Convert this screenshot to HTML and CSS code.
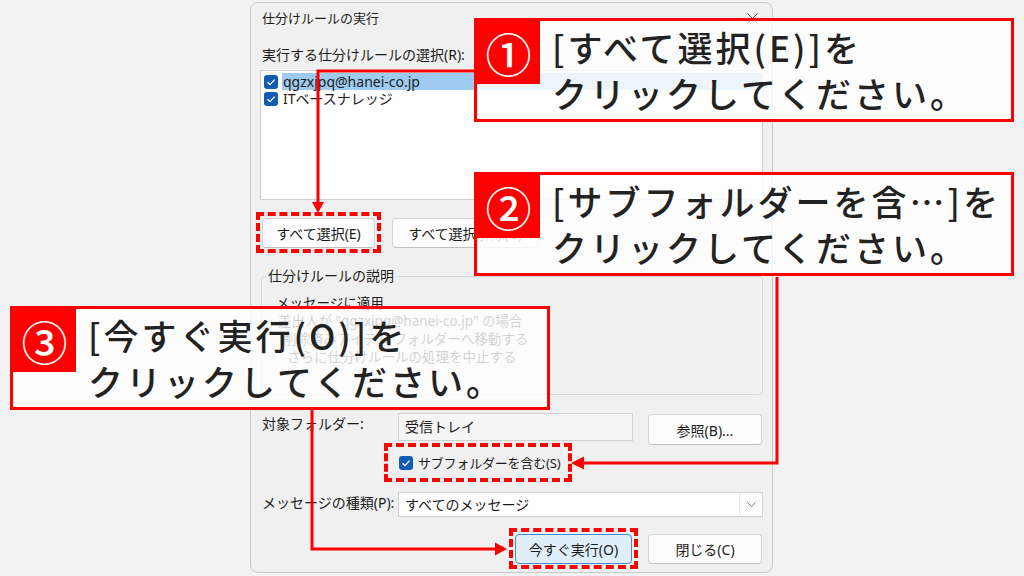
FILE: index.html
```html
<!DOCTYPE html>
<html lang="ja">
<head>
<meta charset="utf-8">
<title>仕分けルールの実行</title>
<link rel="stylesheet" href="styles.css">
</head>
<body>
<div class="dialog">
  <div class="titlebar">
    <span class="title">仕分けルールの実行</span>
    <svg class="close" width="11" height="11" viewBox="0 0 11 11"><path d="M0.5 0.5 L10.5 10.5 M10.5 0.5 L0.5 10.5" stroke="#555" stroke-width="1" fill="none"/></svg>
  </div>
  <div class="label-r">実行する仕分けルールの選択(R):</div>
  <div class="listbox">
    <div class="item">
      <span class="cb"><svg width="14" height="14" viewBox="0 0 14 14"><path d="M3.5 7.2 L6 9.6 L10.6 4.6" stroke="#fff" stroke-width="1.3" fill="none"/></svg></span>
      <span class="itext sel">qgzxjpq@hanei-co.jp</span>
    </div>
    <div class="item">
      <span class="cb"><svg width="14" height="14" viewBox="0 0 14 14"><path d="M3.5 7.2 L6 9.6 L10.6 4.6" stroke="#fff" stroke-width="1.3" fill="none"/></svg></span>
      <span class="itext">ITベースナレッジ</span>
    </div>
  </div>
  <div class="btnrow">
    <div class="hlwrap"><button class="btn b-all">すべて選択(E)</button><span class="hl"></span></div>
    <button class="btn b-none">すべて選択解除(C)</button>
  </div>
  <fieldset class="group">
    <legend>仕分けルールの説明</legend>
    <div class="d1">メッセージに適用</div>
    <div class="d2">差出人が "qgzxjpq@hanei-co.jp" の場合</div>
    <div class="d3">削除済みアイテム フォルダーへ移動する</div>
    <div class="d4">さらに仕分けルールの処理を中止する</div>
  </fieldset>
  <div class="row r-folder">
    <span class="rlabel">対象フォルダー:</span>
    <div class="field">受信トレイ</div>
    <button class="btn b-browse">参照(B)...</button>
  </div>
  <div class="row r-sub">
    <div class="hlwrap subwrap">
      <span class="cb"><svg width="14" height="14" viewBox="0 0 14 14"><path d="M3.5 7.2 L6 9.6 L10.6 4.6" stroke="#fff" stroke-width="1.3" fill="none"/></svg></span>
      <span class="subtext">サブフォルダーを含む(S)</span>
      <span class="hl hl-sub"></span>
    </div>
  </div>
  <div class="row r-type">
    <span class="rlabel">メッセージの種類(P):</span>
    <div class="combo">
      <span class="ctxt">すべてのメッセージ</span>
      <span class="drop"><svg width="9" height="6" viewBox="0 0 9 6"><path d="M0.5 0.5 L4.5 4.5 L8.5 0.5" stroke="#777" stroke-width="1" fill="none"/></svg></span>
    </div>
  </div>
  <div class="row r-actions">
    <div class="hlwrap"><button class="btn primary">今すぐ実行(O)</button><span class="hl"></span></div>
    <button class="btn b-close">閉じる(C)</button>
  </div>
</div>

<svg class="connectors" width="1024" height="576" viewBox="0 0 1024 576">
  <g stroke="#ff0000" stroke-width="3" fill="none">
    <path d="M474 71 H318 V204"/>
    <path d="M777 277 V463 H582"/>
    <path d="M312 409 V549 H497"/>
  </g>
  <g fill="#ff0000">
    <polygon points="312,202 324,202 318,213"/>
    <polygon points="571,463 584,456.5 584,469.5"/>
    <polygon points="507,549 495,542.5 495,555.5"/>
  </g>
</svg>

<div class="callout c1">
  <div class="badge">①</div>
  <div class="ctext">[すべて選択(E)]を<br>クリックしてください。</div>
</div>
<div class="callout c2">
  <div class="badge">②</div>
  <div class="ctext">[サブフォルダーを含…]を<br>クリックしてください。</div>
</div>
<div class="callout c3">
  <div class="badge">③</div>
  <div class="ctext">[今すぐ実行(O)]を<br>クリックしてください。</div>
</div>
</body>
</html>
```

FILE: styles.css
```css
html, body {
  margin: 0;
  padding: 0;
}
body {
  width: 1024px;
  height: 576px;
  overflow: hidden;
  position: relative;
  background: #f2f2f2;
  font-family: "Noto Sans", "Noto Sans CJK JP", sans-serif;
  font-size: 14px;
  color: #1b1b1b;
}

.dialog {
  box-sizing: border-box;
  margin: 2px 0 0 250px;
  width: 523px;
  height: 571px;
  border: 1px solid #c8c8c8;
  border-radius: 8px;
  background: #f0f0f0;
  padding: 0 9px;
}

.titlebar {
  height: 30px;
  display: flex;
  align-items: center;
  justify-content: space-between;
  padding-left: 2px;
}
.title {
  font-size: 13px;
  line-height: 18px;
}
.close {
  margin-right: 5px;
}

.label-r {
  margin-top: 13px;
  line-height: 18px;
  padding-left: 2px;
}

.listbox {
  box-sizing: border-box;
  margin-top: 6px;
  height: 130px;
  background: #fff;
  border: 1px solid #cfcfcf;
  padding: 2px 0 0 0;
}
.item {
  display: flex;
  align-items: center;
  height: 17px;
  padding-left: 3px;
}
.cb {
  width: 14px;
  height: 14px;
  border-radius: 3px;
  background: #0f5cb0;
  display: flex;
  flex: none;
}
.itext {
  flex: 1;
  margin-left: 4px;
  padding-left: 1px;
  line-height: 17px;
}
.itext.sel {
  background: #9ecbef;
}

.btnrow {
  display: flex;
  gap: 17px;
  margin-top: 18px;
  padding-left: 2px;
}
.btn {
  box-sizing: border-box;
  height: 30px;
  border: 1px solid #d3d3d3;
  border-bottom-color: #c0c0c0;
  border-radius: 4px;
  background: #fdfdfd;
  font-family: "Noto Sans", "Noto Sans CJK JP", sans-serif;
  font-size: 14px;
  color: #1b1b1b;
  padding: 0;
}
.b-all { width: 113px; }
.b-none { width: 146px; }

.hlwrap {
  position: relative;
}
.hl {
  position: absolute;
  left: -6px;
  right: -6px;
  top: -6px;
  bottom: -5px;
  border: 4px dashed #ff0000;
  pointer-events: none;
}

.group {
  margin: 19px 0 0 1px;
  padding: 9px 0 28px 4px;
  border: 1px solid #d8d8d8;
  border-radius: 4px;
  min-inline-size: 0;
}
.group legend {
  padding: 0 2px;
  line-height: 18px;
}
.group div {
  font-size: 13.5px;
  line-height: 18px;
  color: #1b1b1b;
  white-space: nowrap;
}
.d1 { padding-left: 10px; }
.d2 { padding-left: 12px; }
.d3 { padding-left: 17px; }
.d4 { padding-left: 21px; }

.row {
  display: flex;
  align-items: flex-start;
}
.rlabel {
  box-sizing: border-box;
  width: 138px;
  padding-left: 2px;
  line-height: 18px;
  margin-top: 2px;
  flex: none;
}
.r-folder {
  margin-top: 18px;
}
.field {
  box-sizing: border-box;
  width: 235px;
  height: 28px;
  border: 1px solid #d2d2d2;
  background: #f5f5f5;
  padding-left: 6px;
  line-height: 26px;
}
.b-browse {
  width: 114px;
  height: 31px;
  margin-left: 15px;
  margin-top: 1px;
}

.r-sub {
  margin-top: 11px;
}
.subwrap {
  display: flex;
  align-items: center;
  margin-left: 139px;
  height: 14px;
}
.subtext {
  margin-left: 5px;
  font-size: 13px;
  letter-spacing: -0.2px;
  line-height: 18px;
}
.hl-sub {
  left: -15px;
  right: -12px;
  top: -13px;
  bottom: -12px;
}

.r-type {
  margin-top: 22px;
}
.combo {
  box-sizing: border-box;
  flex: 1;
  height: 25px;
  background: #fff;
  border: 1px solid #d2d2d2;
  display: flex;
  align-items: center;
  padding-left: 6px;
}
.ctxt {
  flex: 1;
  line-height: 18px;
}
.drop {
  width: 22px;
  height: 23px;
  border-left: 1px solid #e6e6e6;
  display: flex;
  align-items: center;
  justify-content: center;
}

.r-actions {
  margin-top: 17px;
  justify-content: flex-end;
  gap: 16px;
  padding-right: 1px;
}
.primary {
  width: 117px;
  background: #e0eef9;
  border: 1px solid #3d8fd6;
}
.b-close {
  width: 114px;
}

.connectors {
  position: absolute;
  left: 0;
  top: 0;
  z-index: 2;
  pointer-events: none;
}

.callout {
  position: absolute;
  z-index: 3;
  box-sizing: border-box;
  width: 540px;
  height: 104px;
  border: 3px solid #ff0000;
  padding: 1px;
  background: rgba(255, 255, 255, 0.8);
  display: flex;
  align-items: flex-start;
}
.c1 { left: 474px; top: 18px; }
.c2 { left: 474px; top: 172px; }
.c3 { left: 10px; top: 306px; }

.badge {
  flex: none;
  width: 63px;
  height: 63px;
  margin: -1px 0 0 -1px;
  background: #ff0000;
  color: #fff;
  font-family: "Noto Sans CJK JP", sans-serif;
  font-weight: 500;
  font-size: 46px;
  line-height: 63px;
  text-align: center;
}
.ctext {
  margin-left: 12px;
  padding-top: 2px;
  font-family: "Noto Sans CJK JP", sans-serif;
  font-weight: 500;
  font-size: 35px;
  line-height: 46px;
  letter-spacing: 3px;
  color: #222;
  white-space: nowrap;
}
```
